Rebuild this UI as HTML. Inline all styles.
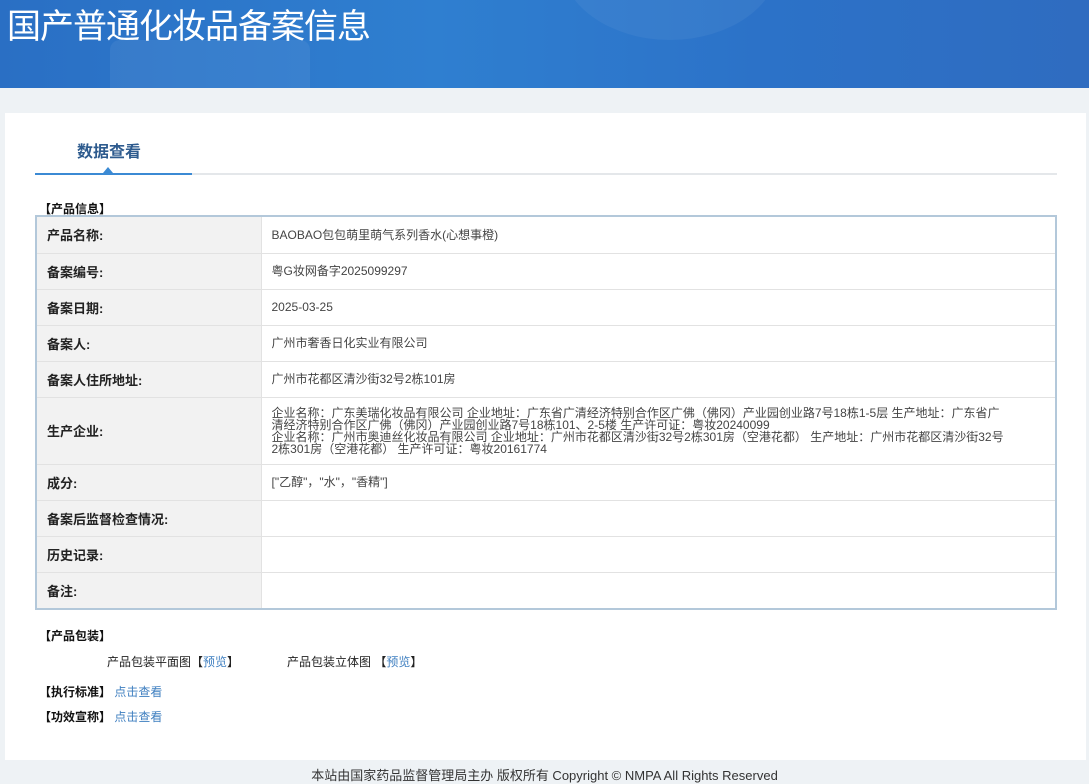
<!DOCTYPE html>
<html><head><meta charset="utf-8"><style>
*{margin:0;padding:0;box-sizing:border-box}
body{width:1089px;height:784px;background:#eef2f5;font-family:"Liberation Sans","Noto Sans CJK SC",sans-serif;position:relative;overflow:hidden;color:#333}
.hdr{position:absolute;left:0;top:0;width:1089px;height:88px;background:linear-gradient(90deg,#2a6fc4 0%,#2f7fd0 40%,#2c72c8 70%,#2f6cc0 100%);overflow:hidden}
.hdr .c1{position:absolute;left:110px;top:40px;width:200px;height:80px;background:rgba(255,255,255,0.06);border-radius:10px}
.hdr .c2{position:absolute;left:560px;top:-120px;width:220px;height:160px;border-radius:50%;background:rgba(255,255,255,0.05)}
.hdr h1{position:absolute;left:7px;top:-1px;font-size:34px;font-weight:normal;color:#fff;letter-spacing:-1px;font-family:"Noto Sans CJK SC",sans-serif}
.panel{position:absolute;left:5px;top:113px;width:1081px;height:647px;background:#fff}
.tab{position:absolute;left:77px;top:138px;font-size:16px;font-weight:bold;color:#2e5b8e}
.tabline{position:absolute;left:35px;top:173px;width:1022px;height:2px;background:#e4e7ea}
.tabact{position:absolute;left:35px;top:173px;width:157px;height:2px;background:#3b8ad4}
.tri{position:absolute;left:103px;top:167px;width:0;height:0;border-left:5px solid transparent;border-right:5px solid transparent;border-bottom:6px solid #3b8ad4}
.sec{position:absolute;font-size:12px;font-weight:bold;color:#111}
.tw{position:absolute;left:35px;top:215px;width:1022px;border:2px solid #b3c8da}
table{width:100%;border-collapse:collapse;font-size:12px}
td{border:1px solid #e2e2e2;padding:0 10px;height:36px;vertical-align:middle}
tr:first-child td{border-top:none}
tr:last-child td{border-bottom:none}
td:first-child{border-left:none}
td:last-child{border-right:none}
td.l{width:224px;background:#f2f2f2;font-weight:bold;font-size:13px;color:#222}
td.v{color:#444;line-height:12px}
td.p{padding-right:45px}
.a{color:#3f7fc0}
.t{position:absolute;font-size:12px;color:#222}
.foot{position:absolute;top:765px;left:0;width:1089px;text-align:center;font-size:13px;color:#333}
</style></head><body>
<div class="hdr"><div class="c1"></div><div class="c2"></div><h1>国产普通化妆品备案信息</h1></div>
<div class="panel"></div>
<div class="tab">数据查看</div>
<div class="tabline"></div><div class="tabact"></div><div class="tri"></div>
<div class="sec" style="left:39px;top:200px">【产品信息】</div>
<div class="tw"><table>
<tr><td class="l" style="height:35px">产品名称:</td><td class="v">BAOBAO包包萌里萌气系列香水(心想事橙)</td></tr>
<tr><td class="l">备案编号:</td><td class="v">粤G妆网备字2025099297</td></tr>
<tr><td class="l">备案日期:</td><td class="v">2025-03-25</td></tr>
<tr><td class="l">备案人:</td><td class="v">广州市奢香日化实业有限公司</td></tr>
<tr><td class="l">备案人住所地址:</td><td class="v">广州市花都区清沙街32号2栋101房</td></tr>
<tr><td class="l" style="height:67px">生产企业:</td><td class="v p">企业名称：广东美瑞化妆品有限公司 企业地址：广东省广清经济特别合作区广佛（佛冈）产业园创业路7号18栋1-5层 生产地址：广东省广清经济特别合作区广佛（佛冈）产业园创业路7号18栋101、2-5楼 生产许可证：粤妆20240099<br>企业名称：广州市奥迪丝化妆品有限公司 企业地址：广州市花都区清沙街32号2栋301房（空港花都） 生产地址：广州市花都区清沙街32号2栋301房（空港花都） 生产许可证：粤妆20161774</td></tr>
<tr><td class="l">成分:</td><td class="v">["乙醇"，"水"，"香精"]</td></tr>
<tr><td class="l">备案后监督检查情况:</td><td class="v"></td></tr>
<tr><td class="l">历史记录:</td><td class="v"></td></tr>
<tr><td class="l" style="height:35px">备注:</td><td class="v"></td></tr>
</table></div>
<div class="sec" style="left:39px;top:627px">【产品包装】</div>
<div class="t" style="left:107px;top:653px">产品包装平面图【<span class="a">预览</span>】</div>
<div class="t" style="left:287px;top:653px">产品包装立体图 【<span class="a">预览</span>】</div>
<div class="sec" style="left:39px;top:683px">【执行标准】 <span class="a" style="font-weight:normal">点击查看</span></div>
<div class="sec" style="left:39px;top:708px">【功效宣称】 <span class="a" style="font-weight:normal">点击查看</span></div>
<div class="foot">本站由国家药品监督管理局主办 版权所有 Copyright © NMPA All Rights Reserved</div>
</body></html>
